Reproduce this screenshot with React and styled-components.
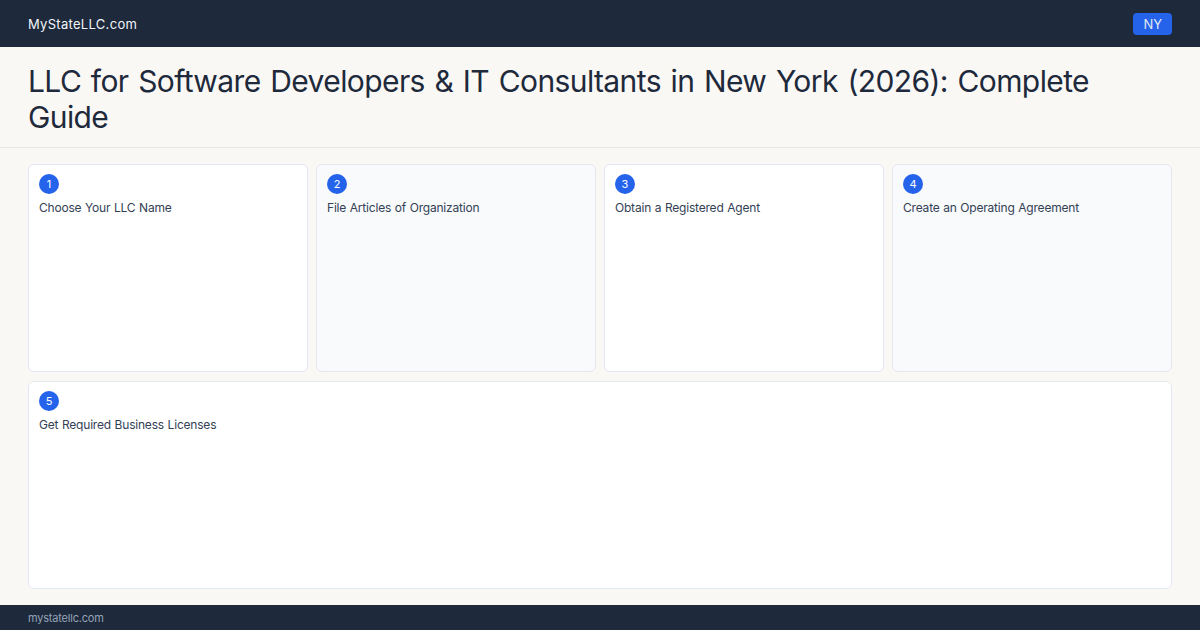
import React from 'react';
import styled, { createGlobalStyle } from 'styled-components';

const GlobalStyle = createGlobalStyle`
  html, body, #root {
    margin: 0;
    padding: 0;
    height: 100%;
  }
  body {
    font-family: Inter, "Noto Sans", sans-serif;
    background: #f9f8f5;
    color: #1e293b;
  }
`;

const Page = styled.div`
  width: 1200px;
  height: 630px;
  display: flex;
  flex-direction: column;
  overflow: hidden;
`;

const TopBar = styled.header`
  height: 47px;
  flex: none;
  background: #1e293b;
  display: flex;
  align-items: center;
  justify-content: space-between;
  padding: 0 28px;
  box-sizing: border-box;
`;

const Brand = styled.div`
  color: #f1f5f9;
  font-size: 13px;
  letter-spacing: 0.3px;
`;

const StateBadge = styled.div`
  background: #2563eb;
  color: #e2e8f0;
  font-size: 13px;
  height: 22px;
  padding: 0 10px;
  border-radius: 4px;
  display: flex;
  align-items: center;
`;

const TitleBlock = styled.div`
  flex: none;
  padding: 16px 28px 12px;
  border-bottom: 1px solid #e5e7eb;
`;

const Title = styled.h1`
  margin: 0;
  font-size: 30px;
  font-weight: 400;
  line-height: 36px;
  color: #1e293b;
  letter-spacing: -0.6px;
  word-spacing: 1.8px;
`;

const Steps = styled.main`
  flex: 1;
  padding: 16px 28px;
  display: grid;
  grid-template-columns: repeat(4, 1fr);
  grid-template-rows: 1fr 1fr;
  gap: 9px 8px;
  min-height: 0;
`;

const StepCard = styled.div`
  background: ${p => (p.$shaded ? '#f8fafc' : '#ffffff')};
  border: 1px solid #e2e8f0;
  border-radius: 6px;
  padding: 9px 10px;
  grid-column: ${p => (p.$wide ? '1 / -1' : 'auto')};
  display: flex;
  flex-direction: column;
  gap: 6px;
`;

const StepNumber = styled.div`
  width: 20px;
  height: 20px;
  border-radius: 50%;
  background: #2563eb;
  color: #ffffff;
  font-size: 11px;
  display: flex;
  align-items: center;
  justify-content: center;
`;

const StepLabel = styled.div`
  font-size: 12px;
  color: #334155;
  line-height: 16px;
  letter-spacing: -0.2px;
  word-spacing: 0.5px;
`;

const Footer = styled.footer`
  height: 25px;
  flex: none;
  background: #1e293b;
  color: #94a3b8;
  font-size: 11px;
  letter-spacing: -0.2px;
  display: flex;
  align-items: center;
  padding: 0 28px;
`;

const steps = [
  'Choose Your LLC Name',
  'File Articles of Organization',
  'Obtain a Registered Agent',
  'Create an Operating Agreement',
  'Get Required Business Licenses',
];

export default function App() {
  return (
    <Page>
      <GlobalStyle />
      <TopBar>
        <Brand>MyStateLLC.com</Brand>
        <StateBadge>NY</StateBadge>
      </TopBar>
      <TitleBlock>
        <Title>LLC for Software Developers &amp; IT Consultants in New York (2026): Complete Guide</Title>
      </TitleBlock>
      <Steps>
        {steps.map((label, i) => (
          <StepCard key={label} $shaded={i % 2 === 1} $wide={i === 4}>
            <StepNumber>{i + 1}</StepNumber>
            <StepLabel>{label}</StepLabel>
          </StepCard>
        ))}
      </Steps>
      <Footer>mystatellc.com</Footer>
    </Page>
  );
}
